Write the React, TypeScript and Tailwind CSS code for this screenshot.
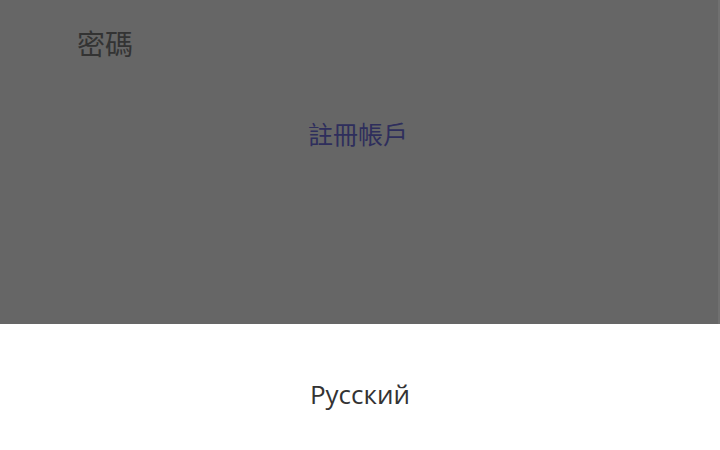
export default function App() {
  return (
    <div
      className="flex h-[450px] w-[720px] flex-col overflow-hidden bg-white"
      style={{ fontFamily: '"Noto Sans", "Noto Sans CJK TC", sans-serif' }}
    >
      {/* dimmed login form behind the sheet */}
      <div className="flex h-[324px] flex-col border-r-2 border-[#707070] bg-[#666666]">
        <div className="pl-[77px] pt-[25px] text-[28px] leading-[38px] text-[#333333]">密碼</div>
        <div className="mt-[54px] flex justify-center pr-[2px]">
          <span className="text-[25px] leading-[34px] text-[#2e2e5c]">註冊帳戶</span>
        </div>
      </div>

      {/* language sheet */}
      <div className="flex flex-1 items-start justify-center pt-[53px]">
        <span
          className="text-[26px] leading-[34px] text-[#333333]"
          style={{ fontFamily: '"Open Sans", "Noto Sans", sans-serif' }}
        >
          Русский
        </span>
      </div>
    </div>
  );
}
